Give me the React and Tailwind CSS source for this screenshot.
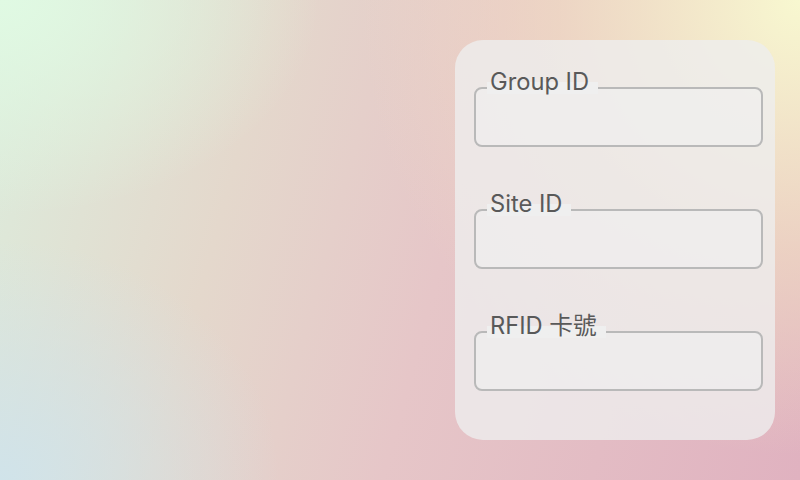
import React from "react";

const fields = ["Group ID", "Site ID", "RFID 卡號"];

export default function App() {
  return (
    <div className="w-[800px] h-[480px] overflow-hidden flex justify-end items-start pt-[40px] pr-[25px] bg-[radial-gradient(ellipse_55%_95%_at_100%_0%,#f8f8d0_0%,rgba(240,220,195,0.7)_55%,rgba(240,220,195,0)_100%),radial-gradient(ellipse_40%_45%_at_0%_0%,#e0fae3_0%,rgba(224,250,227,0)_100%),radial-gradient(ellipse_35%_50%_at_0%_100%,#d0e3ea_0%,rgba(208,227,234,0)_100%),linear-gradient(105deg,#dcecdc_0%,#e4d8cc_30%,#e6c6c8_55%,#e0b2c0_100%)] font-['Inter','Noto_Sans_CJK_TC',sans-serif]">
      <div className="w-[320px] h-[400px] rounded-[28px] bg-[#eeeeee]/80 pl-[19px] pr-[12px] pt-[47px] flex flex-col gap-[62px]">
        {fields.map((label) => (
          <div
            key={label}
            className="relative h-[60px] rounded-[8px] border-2 border-[#b9b9b9] bg-[#f0f0f0]/60"
          >
            <span className="absolute left-[11px] top-[-19px] pl-[3px] pr-[9px] text-[23.7px] leading-[24px] text-[#595959] whitespace-nowrap bg-linear-to-b from-transparent from-50% to-[#efefef] to-50%">
              {label}
            </span>
          </div>
        ))}
      </div>
    </div>
  );
}
